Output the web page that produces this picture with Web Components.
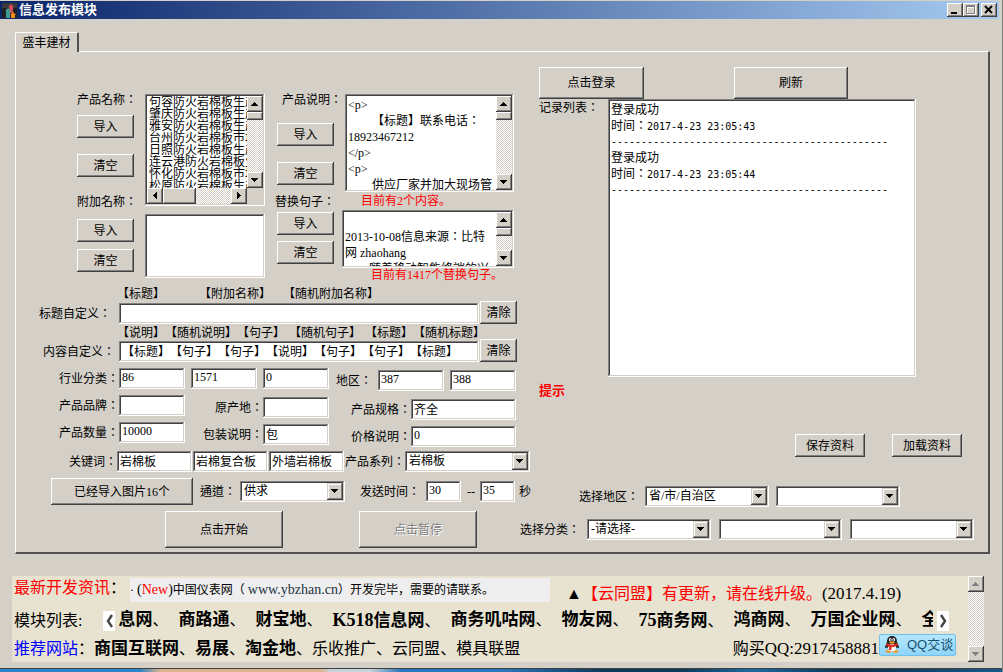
<!DOCTYPE html>
<html lang="zh-CN">
<head>
<meta charset="utf-8">
<title>信息发布模块</title>
<style>
html, body { margin: 0; }
body {
  --face: #d4d0c8;
  --raised: inset -1px -1px #404040, inset 1px 1px #fff, inset -2px -2px #808080;
  --sunken: inset -1px -1px #fff, inset 1px 1px #808080, inset -2px -2px #d4d0c8, inset 2px 2px #404040;
  --ui: "Liberation Serif", "Noto Sans CJK SC", sans-serif;
  --ui-label: "Liberation Serif", "Noto Sans CJK TC", sans-serif;
  background: #d4d0c8;
  font: 12px/16px var(--ui);
  text-spacing-trim: space-all;
  color: #000;
}
</style>
</head>
<body>
<publish-window></publish-window>

<script>
const COMMON = `<style>
*, *::before, *::after { box-sizing: border-box; }
button, input, select, textarea { font: inherit; color: inherit; text-spacing-trim: space-all; margin: 0; border: 0; border-radius: 0; outline: 0; }
[hidden] { display: none; }
</style>`;

class Base extends HTMLElement {
  connectedCallback() {
    if (this.shadowRoot) return;
    this.attachShadow({ mode: 'open' }).innerHTML = COMMON + this.render();
  }
  attr(name) { return this.getAttribute(name) || ''; }
}
const define = (name, render) => customElements.define(name, class extends Base {
  render() { return render(this); }
});

/* Raised push button; its size comes from --w and --h */
define('win-button', el => `<style>
:host { display: block; width: var(--w, 57px); height: var(--h, 23px); flex: none; }
button { display: block; width: 100%; height: 100%; padding: 0; background: var(--face); box-shadow: var(--raised); white-space: nowrap; }
button:disabled { color: #808080; text-shadow: 1px 1px #fff; }
</style><button type="button" ${el.hasAttribute('disabled') ? 'disabled' : ''}><slot></slot></button>`);

/* Caption and single-line text box */
define('win-field', el => `<style>
:host { display: flex; align-items: center; flex: none; }
label { width: var(--lw, auto); padding-right: var(--lp, 0); text-align: right; white-space: nowrap; font-family: var(--ui-label); }
input { width: var(--w, 66px); height: 21px; padding: 0 3px 2px; background: #fff; box-shadow: var(--sunken); }
</style><label lang="zh-Hant" for="f" ${el.attr('label') ? '' : 'hidden'}>${el.attr('label')}</label><input id="f" type="text" ${el.attr('label') ? '' : `aria-label="${el.attr('name')}"`} value="${el.attr('value')}">`);

/* Caption and drop-down */
define('win-combo', el => `<style>
:host { display: flex; align-items: center; flex: var(--grow, none); }
label { width: var(--lw, auto); padding-right: var(--lp, 0); text-align: right; white-space: nowrap; font-family: var(--ui-label); }
.box { position: relative; width: var(--w, auto); flex: var(--grow, none); height: 21px; background: #fff; box-shadow: var(--sunken); }
select { appearance: none; width: 100%; height: 100%; padding: 0 20px 2px 4px; background: none; }
svg { position: absolute; top: 2px; right: 2px; pointer-events: none; }
</style><label lang="zh-Hant" for="s" ${el.attr('label') ? '' : 'hidden'}>${el.attr('label')}</label><div class="box"><select id="s" ${el.attr('label') ? '' : `aria-label="${el.attr('name')}"`}><option>${el.attr('value')}</option></select>
<svg width="16" height="17" shape-rendering="crispEdges"><path fill="#404040" d="M0 0h16v17H0z"/><path fill="#d4d0c8" d="M0 0h15v16H0z"/><path fill="#808080" d="M1 1h14v15H1z"/><path fill="#fff" d="M1 1h13v14H1z"/><path fill="#d4d0c8" d="M2 2h12v13H2z"/><path d="M4 6h7v1H4zM5 7h5v1H5zM6 8h3v1H6zM7 9h1v1H7z"/></svg></div>`);

/* Classic scroll bar with a dithered track */
define('win-scroll', el => {
  const h = el.hasAttribute('horizontal');
  const ink = el.hasAttribute('inactive') ? '#808080' : '#000';
  const up = 'M7 6h1v1H7zM6 7h3v1H6zM5 8h5v1H5zM4 9h7v1H4z', down = 'M4 6h7v1H4zM5 7h5v1H5zM6 8h3v1H6zM7 9h1v1H7z';
  const left = 'M6 7h1v1H6zM7 6h1v3H7zM8 5h1v5H8zM9 4h1v7H9z', right = 'M6 4h1v7H6zM7 5h1v5H7zM8 6h1v3H8zM9 7h1v1H9z';
  const b = (d, n) => `<button type="button" aria-label="${n}"><svg width="16" height="16" shape-rendering="crispEdges"><path fill="${ink}" d="${d}"/></svg></button>`;
  return `<style>
:host { display: flex; flex-direction: ${h ? 'row' : 'column'}; flex: none; ${h ? 'height' : 'width'}: 16px;
  background: repeating-conic-gradient(#fff 0 25%, var(--face) 0 50%) 0 0 / 2px 2px; }
button { width: 16px; height: 16px; padding: 0; flex: none; background: var(--face); box-shadow: var(--raised); }
svg { display: block; }
.thumb { flex: none; ${h ? 'width' : 'height'}: var(--thumb, 0px); background: var(--face); box-shadow: var(--raised); }
.rest { flex: 1; }
</style>${b(h ? left : up, '向前')}<div class="thumb"></div><div class="rest"></div>${b(h ? right : down, '向后')}`;
});

/* Multi-line text box with a scroll bar; the parser drops a textarea's first line break, so one is added */
define('win-memo', el => `<style>
:host { display: flex; width: 100%; height: var(--h); padding: 2px; background: #fff; box-shadow: var(--sunken); }
textarea { flex: 1; min-width: 0; height: 100%; padding: 1px 0 0 1px; resize: none; overflow: hidden; background: none; white-space: pre; font-family: var(--ui-label); }
</style><textarea lang="zh-Hant" aria-label="${el.attr('name')}">
${el.textContent.replace(/</g, '&lt;')}</textarea>${el.hasAttribute('scroll') ? '<win-scroll style="--thumb:8px"></win-scroll>' : ''}`);

/* List box, scrolling both ways */
define('win-list', el => `<style>
:host { display: grid; grid-template: minmax(0, 1fr) 16px / minmax(0, 1fr) 16px; height: 112px; width: 120px; padding: 2px; background: var(--face); box-shadow: var(--sunken); }
ul { margin: 0; padding: 0 0 0 2px; list-style: none; overflow: hidden; background: #fff; line-height: 12px; white-space: nowrap; }
</style><ul role="listbox" aria-label="产品名称">${el.attr('items').split(',').map(t => `<li role="option">${t}</li>`).join('')}</ul>
<win-scroll style="--thumb:8px"></win-scroll><win-scroll horizontal style="--thumb:33px"></win-scroll>`);

define('title-bar', () => `<style>
:host { display: flex; align-items: center; height: 18px; margin: 1px 3px 0 0; padding: 0 2px; background: linear-gradient(90deg, #0a246a, #a6caf0); }
h1 { flex: 1; margin: 0 0 0 2px; font: bold 13px/18px var(--ui); color: #fff; }
button { width: 16px; height: 14px; padding: 0; background: var(--face); box-shadow: var(--raised); }
.close { margin-left: 2px; }
svg { display: block; }
</style>
<svg width="15" height="15" viewBox="0 0 15 15"><path fill="#222" d="M0 0h15v15H0z"/><path fill="#3a3a3a" d="M0 0h15v5H0z"/><path fill="#cf4a5c" d="M9 1l3 3h-1v6H7V4H6z"/><path fill="#3f9c94" d="M6 5l3 3H8v7H4V8H3z"/><path fill="#f28c1c" d="M11 9l3 3h-1v3h-4v-3H8z"/></svg>
<h1>信息发布模块</h1>
<button type="button" aria-label="最小化"><svg width="16" height="14"><path d="M4 9h6v2H4z"/></svg></button>
<button type="button" aria-label="最大化"><svg width="16" height="14" shape-rendering="crispEdges"><path fill="#fff" d="M4 3h9v9H4z"/><path fill="#808080" d="M3 2h9v9H3z"/><path fill="#fff" d="M4 4h7v6H4z"/><path fill="#d4d0c8" d="M5 5h6v5H5z"/></svg></button>
<button type="button" class="close" aria-label="关闭"><svg width="16" height="14"><path d="M4 3l7 7M11 3l-7 7" stroke="#000" stroke-width="2"/></svg></button>`);

define('tab-pane', el => `<style>
:host { display: block; margin: 13px 12px 0 15px; }
.tab { position: relative; z-index: 1; display: block; width: 64px; height: 20px; margin-bottom: -1px; padding: 0; background: var(--face);
  border: solid; border-width: 1px 2px 0 1px; border-color: #fff #505050 #fff #fff; border-radius: 2px 2px 0 0; }
.body { border: solid; border-width: 1px 2px 2px 1px; border-color: #fff #505050 #505050 #fff; }
</style><button class="tab" type="button" role="tab" aria-selected="true">${el.attr('label')}</button><div class="body" role="tabpanel"><slot></slot></div>`);

/* Names, descriptions and replacement sentences */
define('source-lists', () => `<style>
:host { display: grid; grid-template-columns: 68px 130px 67px 172px; height: 233px; padding: 39px 0 0 61px; }
.col { display: grid; align-content: start; align-items: start; justify-items: start; }
.a { grid-template-rows: 24px 39px 39px 26px 30px 23px; }
.b { grid-template-rows: 120px 64px; padding-top: 3px; }
.c { grid-template-rows: 32px 39px 31px 19px 29px 23px; }
.c win-button { margin-left: 2px; }
.d { grid-template-rows: 98px 18px 58px 16px; padding-top: 3px; justify-items: end; }
.lab { font-family: var(--ui-label); line-height: 18px; }
.end { justify-self: end; }
.b win-memo { width: 120px; }
.narrow { width: 169px; }
.note { justify-self: start; padding-left: 19px; color: #f00; line-height: 18px; }
.far { padding-left: 29px; line-height: 14px; }
</style>
<div class="col a"><span class="lab" lang="zh-Hant">产品名称：</span><win-button>导入</win-button><win-button>清空</win-button>
<span class="lab" lang="zh-Hant">附加名称：</span><win-button>导入</win-button><win-button>清空</win-button></div>
<div class="col b"><win-list items="句容防火岩棉板生产,肇庆防火岩棉板生产,雅安防火岩棉板生产,台州防火岩棉板市场,日照防火岩棉板生产,连云港防火岩棉板生,怀化防火岩棉板市场,松原防火岩棉板生产"></win-list><win-memo name="附加名称" style="--h:64px"></win-memo></div>
<div class="col c"><span class="lab end" lang="zh-Hant">产品说明：</span><win-button>导入</win-button><win-button>清空</win-button>
<span class="lab" lang="zh-Hant">替换句子：</span><win-button>导入</win-button><win-button>清空</win-button></div>
<div class="col d"><win-memo class="narrow" scroll name="产品说明" style="--h:98px">&lt;p&gt;
　　【标题】联系电话：
18923467212
&lt;/p&gt;
&lt;p&gt;
　　供应厂家并加大现场管</win-memo>
<span class="note">目前有2个内容。</span>
<win-memo scroll name="替换句子" style="--h:58px">&#10;2013-10-08信息来源：比特
网 zhaohang
　　随着移动智能终端的兴</win-memo>
<span class="note far">目前有1417个替换句子。</span></div>`);

/* Template and product fields */
define('product-form', () => `<style>
:host { display: block; }
.row { display: flex; align-items: flex-start; }
.end { align-items: flex-end; }
.tokens { height: 16px; padding-left: 101px; white-space: nowrap; line-height: 18px; }
.second { height: 15px; }
.tokens span { flex: none; }
.g3 { margin-left: 34px; } .g2 { margin-left: 12px; } .g1 { margin-left: 4px; }
.edit { height: 23px; --lw: 103px; --w: 360px; }
.edit win-button { --w: 37px; margin-left: 1px; }
.codes { height: 33px; padding-top: 6px; --w: 66px; gap: 6px; }
.down { padding-top: 2px; }
.trio { height: 56px; }
.trio > div { display: grid; row-gap: 6px; align-content: start; }
.t1 { --lw: 103px; } .t2 { --lw: 78px; padding-top: 2px; } .t3 { --lw: 82px; --w: 105px; padding-top: 4px; }
.keys { height: 27px; --w: 75px; gap: 1px; }
.send { height: 27px; align-items: center; padding-left: 35px; }
</style>
<div class="row tokens"><span>【标题】</span><span class="g3">【附加名称】</span><span class="g2">【随机附加名称】</span></div>
<div class="row end edit"><win-field label="标题自定义：" style="--lp:8px"></win-field><win-button>清除</win-button></div>
<div class="row tokens second"><span>【说明】</span><span>【随机说明】</span><span>【句子】</span><span class="g1">【随机句子】</span><span class="g1">【标题】</span><span>【随机标题】</span></div>
<div class="row end edit"><win-field label="内容自定义：" value="【标题】【句子】【句子】【说明】【句子】【句子】【标题】" style="--lp:4px"></win-field><win-button>清除</win-button></div>
<div class="row codes"><win-field label="行业分类：" value="86" style="--lw:103px"></win-field><win-field name="二级行业" value="1571"></win-field><win-field name="三级行业" value="0"></win-field>
<win-field class="down" label="地区：" value="387" style="--lw:43px;--lp:6px"></win-field><win-field class="down" name="城市" value="388"></win-field></div>
<div class="row trio">
<div class="t1"><win-field label="产品品牌："></win-field><win-field label="产品数量：" value="10000"></win-field></div>
<div class="t2"><win-field label="原产地："></win-field><win-field label="包装说明：" value="包"></win-field></div>
<div class="t3"><win-field label="产品规格：" value="齐全"></win-field><win-field label="价格说明：" value="0"></win-field></div></div>
<div class="row keys"><win-field label="关键词：" value="岩棉板" style="--lw:101px"></win-field><win-field name="关键词二" value="岩棉复合板"></win-field><win-field name="关键词三" value="外墙岩棉板"></win-field><win-combo label="产品系列：" value="岩棉板" style="--lw:60px;--w:125px"></win-combo></div>
<div class="row send"><win-button style="--w:142px;--h:27px">已经导入图片16个</win-button><win-combo label="通道：" value="供求" style="--lw:47px;--lp:4px;--w:105px"></win-combo>
<win-field label="发送时间：" value="30" style="--lw:81px;--lp:6px;--w:35px"></win-field><win-field label="--" value="35" style="--lw:19px;--lp:5px;--w:35px"></win-field><span class="g1">秒</span></div>`);

/* Login, log output and saved data */
define('log-pane', () => `<style>
:host { display: block; padding: 15px 0 0 5px; }
.row { display: flex; }
.top { --h: 32px; gap: 90px; }
.lab { width: 69px; flex: none; font-family: var(--ui-label); line-height: 18px; }
.log { flex: 1; height: 278px; margin-right: 72px; padding: 3px; background: #fff; box-shadow: var(--sunken); overflow: hidden; white-space: nowrap; font-family: var(--ui-label); }
p { margin: 0; height: 16px; }
.mono { font: 10px/16px "DejaVu Sans Mono", monospace; }
b { display: block; margin-top: 6px; font-size: 13px; color: #f00; }
.save { justify-content: flex-end; gap: 27px; margin-top: 35px; padding-right: 26px; --w: 70px; }
.area { gap: 7px; margin-top: 29px; padding: 0 88px 0 40px; --grow: 1; }
.area win-combo:first-child { flex: 191; } .area win-combo:last-child { flex: 125; }
</style>
<div class="row top"><win-button style="--w:105px">点击登录</win-button><win-button style="--w:114px">刷新</win-button></div>
<div class="row"><span class="lab" lang="zh-Hant">记录列表：</span><div class="log" role="log" lang="zh-Hant"><p>登录成功</p><p>时间：<span class="mono">2017-4-23 23:05:43</span></p><p class="mono">----------------------------------------------</p><p>登录成功</p><p>时间：<span class="mono">2017-4-23 23:05:44</span></p><p class="mono">----------------------------------------------</p></div></div>
<b>提示</b>
<div class="row save"><win-button>保存资料</win-button><win-button>加载资料</win-button></div>
<div class="row area"><win-combo label="选择地区：" value="省/市/自治区" style="--lp:6px"></win-combo><win-combo name="城市"></win-combo></div>`);

define('action-row', () => `<style>
:host { display: flex; align-items: flex-start; padding: 4px 14px 4px 149px; --h: 37px; }
win-button { --w: 118px; }
win-button + win-button { margin-left: 76px; }
.cats { display: flex; flex: 1; gap: 8px; margin-left: 43px; padding-top: 8px; --grow: 1; }
.cats win-combo { flex: 124; } .cats win-combo:first-child { flex: 191; }
</style><win-button>点击开始</win-button><win-button disabled>点击暂停</win-button>
<div class="cats"><win-combo label="选择分类：" value="-请选择-" style="--lp:7px"></win-combo><win-combo name="二级分类"></win-combo><win-combo name="三级分类"></win-combo></div>`);

define('news-panel', () => {
  const mods = ['商路通', '财宝地', '<i>K518</i>信息网', '商务叽咕网', '物友网', '<i>75</i>商务网', '鸿商网', '万国企业网'];
  return `<style>
:host { display: flex; margin: 22px 18px 6px 12px; background: #e7e3d0; font-size: 16px; line-height: 24px; white-space: nowrap; }
.rows { flex: 1; min-width: 0; display: grid; grid-template-rows: 30px 29px 27px; padding-left: 2px; }
.row { display: flex; align-items: center; min-width: 0; }
.head { flex: none; color: #f00; }
.head span { color: #000; }
.blue { color: #00f; }
a { color: inherit; text-decoration: none; }
i { font-style: normal; font-size: 18px; }
.news { width: 420px; height: 24px; margin: 0 16px 2px 4px; background: #eee; font-size: 12px; overflow: hidden; }
.news i, .news .url { font-size: 14px; }
.news .url { color: #234; }
.red { color: #f00; }
.up { padding-top: 4px; }
.up i { font-size: 17px; }
.first { align-items: flex-start; padding-top: 2px; }
.first .head { line-height: 20px; }
.mods { flex: 1; min-width: 0; display: flex; gap: 10px; overflow: hidden; margin: 0 4px 0 3px; }
.mods span, .links a, .links span { flex: none; }
.mods a, .strong { font-weight: bold; font-size: 17px; }
.nav { flex: none; width: 12px; height: 20px; padding: 0; border: 0; background: #fff; }
.nav svg { display: block; }
.prev { margin-left: 21px; } .next { margin-right: 19px; }
.buy { margin-left: auto; }
.buy i { font-size: 17px; }
.qq { display: flex; align-items: center; gap: 7px; width: 77px; height: 22px; margin: 0 12px 8px 0; padding: 0 4px; border: 1px solid #6fc0ea; border-radius: 2px; background: linear-gradient(#b4e8ff, #8fd4f8); font: 13px/20px "Liberation Sans", "Noto Sans CJK SC", sans-serif; color: #17506e; }
.qq svg { flex: none; }
</style>
<div class="rows">
<div class="row first"><span class="head">最新开发资讯<span>：</span></span><div class="news">· <i>(<span class="red">New</span>)</i>中国仪表网（ <a href="#ybzhan" class="url">www.ybzhan.cn</a>）开发完毕，需要的请联系。</div>
<span class="up">▲<a href="#upgrade" class="red">【云同盟】有更新，请在线升级。</a><i>(2017.4.19)</i></span></div>
<div class="row"><span>模块列表:</span><button type="button" class="nav prev" aria-label="上一组"><svg width="12" height="20"><path d="M9 4L5 10l4 6" fill="none" stroke="#444" stroke-width="2.4"/></svg></button>
<div class="mods"><span><a href="#m">息网</a>、</span>${mods.map(m => `<span><a href="#m">${m}</a>、</span>`).join('')}<span><a href="#m">全</a></span></div>
<button type="button" class="nav next" aria-label="下一组"><svg width="12" height="20"><path d="M4 4l4 6-4 6" fill="none" stroke="#444" stroke-width="2.4"/></svg></button></div>
<div class="row links"><span class="blue">推荐网站</span><span>：</span><a class="strong" href="#1">商国互联网</a>、<a class="strong" href="#2">易展</a>、<a class="strong" href="#3">淘金地</a>、<a href="#4">乐收推广</a>、<a href="#5">云同盟</a>、<a href="#6">模具联盟</a>
<span class="buy">购买<i>QQ:2917458881</i></span>
<a class="qq" href="#qq"><svg width="16" height="17" viewBox="0 0 16 17"><ellipse cx="4.500" cy="15.500" rx="3" ry="1.300" fill="#f39a1c"/><ellipse cx="11.500" cy="15.500" rx="3" ry="1.300" fill="#f39a1c"/><path fill="#222" d="M8 0C4.500 0 3 2.500 3 6L1 11c0 2 1 1 2 0 1 4 9 4 10 0 1 1 2 2 2 0l-2-5c0-3.500-1.500-6-5-6z"/><ellipse cx="8" cy="11.500" rx="4" ry="3.800" fill="#fff"/><ellipse cx="6.300" cy="3.800" rx="1.300" ry="1.800" fill="#fff"/><ellipse cx="9.700" cy="3.800" rx="1.300" ry="1.800" fill="#fff"/><path d="M6.500 3.500v1M9.500 3.500v1" stroke="#000"/><ellipse cx="8" cy="6.500" rx="3" ry="1" fill="#f6a21d"/><path fill="#e02a1f" d="M3 7c3 2 7 2 10 0l1 2c-2 1.500-4 2-6.500 2v3H5v-3L2 9z"/></svg>QQ交谈</a></div>
</div><win-scroll inactive></win-scroll>`;
});

define('publish-window', () => `<style>
:host { display: flex; flex-direction: column; min-height: 100vh; border-right: 1px solid #808080; overflow: hidden; }
.main { display: grid; grid-template-columns: 518px minmax(0, 1fr); }
.desktop { flex: 1; min-height: 4px; border-top: 1px solid #404040; background: linear-gradient(90deg, #2d86c8 0 14%, #d9b38c 16% 32%, #c8d4dc 33% 37%, #2a78bd 40% 50%, #0d3a5c 60% 68%, #1b6aa0 75%, #0b2f4c 85%, #175a8c); }
</style>
<title-bar></title-bar>
<tab-pane label="盛丰建材"><div class="main"><div><source-lists></source-lists><product-form></product-form></div><log-pane></log-pane></div><action-row></action-row></tab-pane>
<news-panel></news-panel>
<div class="desktop"></div>`);
</script>
</body>
</html>
